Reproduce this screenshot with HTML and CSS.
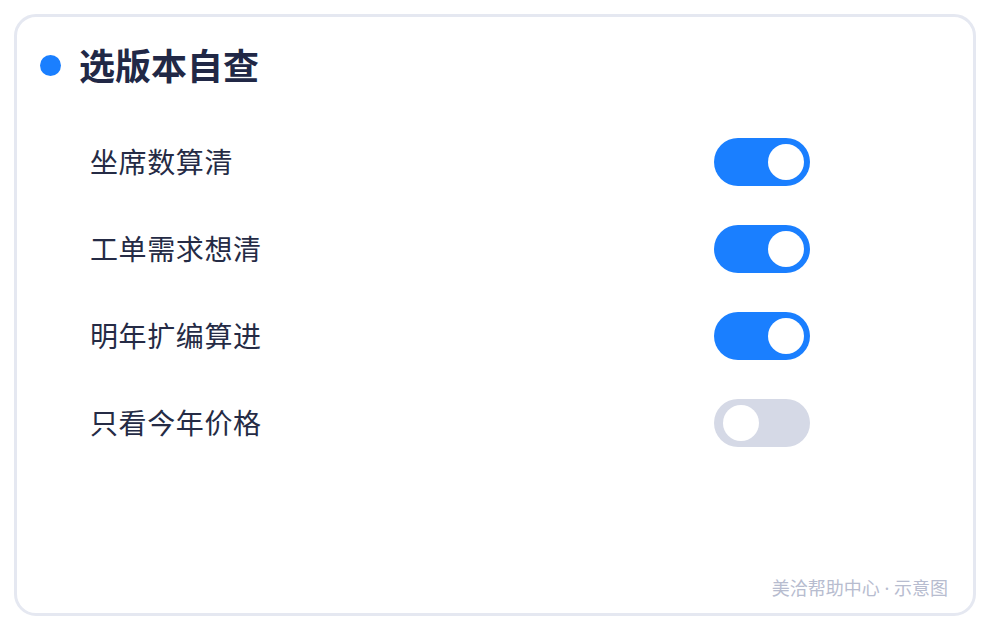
FILE: index.html
```html
<!DOCTYPE html>
<html lang="zh">
<head>
<meta charset="utf-8">
<link rel="stylesheet" href="styles.css">
</head>
<body>
<div class="card">
  <div class="title-row">
    <span class="dot"></span>
    <h1 class="title">选版本自查</h1>
  </div>
  <ul class="list">
    <li class="row"><span class="label">坐席数算清</span><span class="toggle on"><span class="knob"></span></span></li>
    <li class="row"><span class="label">工单需求想清</span><span class="toggle on"><span class="knob"></span></span></li>
    <li class="row"><span class="label">明年扩编算进</span><span class="toggle on"><span class="knob"></span></span></li>
    <li class="row"><span class="label">只看今年价格</span><span class="toggle off"><span class="knob"></span></span></li>
  </ul>
  <div class="footer">美洽帮助中心 · 示意图</div>
</div>
</body>
</html>
```
FILE: styles.css
```css
* { box-sizing: border-box; }
html, body { margin: 0; padding: 0; background: #ffffff; }
body {
  width: 990px;
  height: 630px;
  padding: 14px;
  font-family: "Noto Sans CJK SC", "Noto Sans", sans-serif;
}
.card {
  width: 962px;
  height: 602px;
  border: 3px solid #e5e8f1;
  border-radius: 22px;
  display: flex;
  flex-direction: column;
  padding: 25px 25px 13px 23px;
}
.title-row {
  display: flex;
  align-items: center;
  height: 44px;
}
.dot {
  width: 21px;
  height: 21px;
  border-radius: 50%;
  background: #1a7fff;
  margin-right: 18px;
  margin-top: 2px;
  flex: none;
}
.title {
  margin: 0;
  font-size: 36px;
  line-height: 44px;
  font-weight: 700;
  color: #212846;
}
.list {
  list-style: none;
  margin: 52px 0 0 0;
  padding: 0 0 0 50px;
  width: 770px;
  display: flex;
  flex-direction: column;
  gap: 39px;
}
.row {
  display: flex;
  align-items: center;
  justify-content: space-between;
  height: 48px;
}
.label {
  font-size: 28px;
  line-height: 48px;
  letter-spacing: 0.6px;
  color: #252b45;
  margin-top: -2px;
}
.toggle {
  width: 96px;
  height: 48px;
  border-radius: 24px;
  display: flex;
  align-items: center;
}
.toggle.on { background: #1a7fff; justify-content: flex-end; padding: 0 6px; }
.toggle.off { background: #d5d9e6; justify-content: flex-start; padding: 0 9px; }
.knob {
  width: 36px;
  height: 36px;
  border-radius: 50%;
  background: #ffffff;
}
.footer {
  margin-top: auto;
  align-self: flex-end;
  font-family: "Noto Sans", "Noto Sans CJK SC", sans-serif;
  font-size: 18px;
  line-height: 24px;
  color: #b7bccf;
}
```
